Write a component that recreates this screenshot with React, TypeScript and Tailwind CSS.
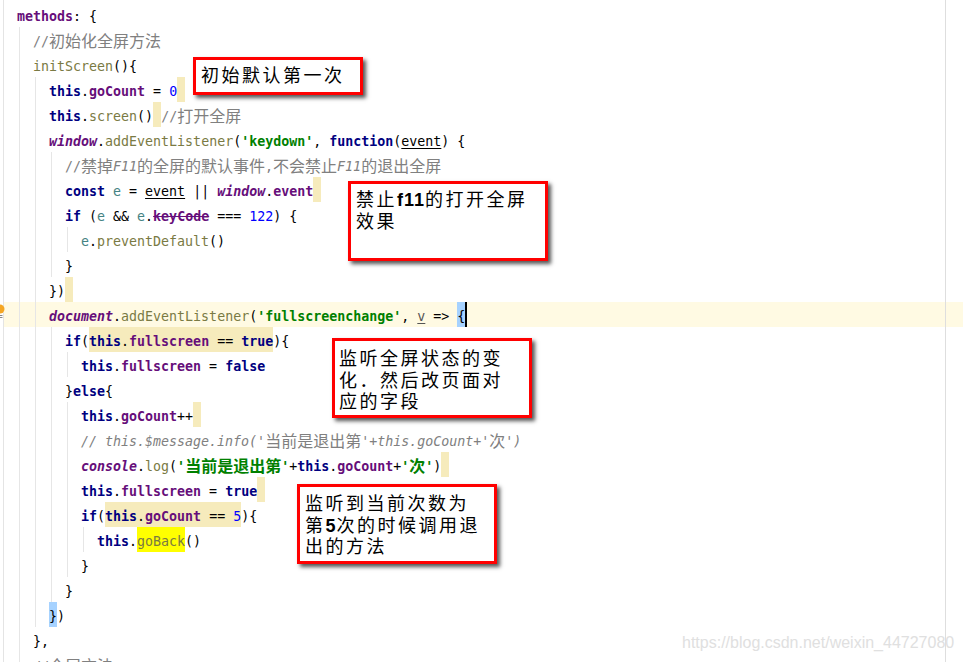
const mono = { fontFamily: '"DejaVu Sans Mono", "Noto Sans CJK SC", monospace' };

// syntax colours, same as the IDE's default light scheme
const kw = "font-bold text-[#000080]";
const prop = "font-bold text-[#660e7a]";
const glob = "font-bold italic text-[#660e7a]";
const fn = "text-[#7a7a43]";
const str = "font-bold text-[#008000]";
const num = "text-[#0000ff]";
const cmt = "text-[#808080]";
const cmtI = "italic text-[#808080]";
const local = "text-[#458383]";
const plain = "text-[#000000]";
const param = "text-[#000000] underline underline-offset-2";
const paramV = "text-[#555555] underline underline-offset-2";
const zh = "text-[16px]";
const hl = "bg-[#f6ebbc]";
const sel = "bg-[#a6d2ff]";

type Token = [string, string?];
type Line = { depth: number; guides: number; caret?: boolean; tokens: Token[] };

const thisDot: Token[] = [["this", kw], [".", plain]];

const lines: Line[] = [
  { depth: 0, guides: 0, tokens: [["methods", prop], [": {", plain]] },
  { depth: 1, guides: 1, tokens: [["//", cmt], ["初始化全屏方法", `${cmt} ${zh}`]] },
  { depth: 1, guides: 1, tokens: [["initScreen", fn], ["(){", plain]] },
  { depth: 2, guides: 2, tokens: [...thisDot, ["goCount", prop], [" = ", plain], ["0", num], [" ", hl]] },
  { depth: 2, guides: 2, tokens: [...thisDot, ["screen", fn], ["()", plain], [" ", hl], ["//", cmt], ["打开全屏", `${cmt} ${zh}`]] },
  {
    depth: 2,
    guides: 2,
    tokens: [
      ["window", glob], [".", plain], ["addEventListener", fn], ["(", plain], ["'keydown'", str], [", ", plain],
      ["function", kw], ["(", plain], ["event", param], [") {", plain],
    ],
  },
  {
    depth: 3,
    guides: 3,
    tokens: [
      ["//", cmt], ["禁掉", `${cmt} ${zh}`], ["F11", cmtI], ["的全屏的默认事件", `${cmt} ${zh}`], [",", cmt],
      ["不会禁止", `${cmt} ${zh}`], ["F11", cmtI], ["的退出全屏", `${cmt} ${zh}`],
    ],
  },
  {
    depth: 3,
    guides: 3,
    tokens: [
      ["const", kw], [" ", plain], ["e", local], [" = ", plain], ["event", param], [" || ", plain],
      ["window", glob], [".", plain], ["event", prop], [" ", hl],
    ],
  },
  {
    depth: 3,
    guides: 3,
    tokens: [
      ["if", kw], [" (", plain], ["e", local], [" && ", plain], ["e", local], [".", plain],
      ["keyCode", `${prop} line-through`], [" === ", plain], ["122", num], [") {", plain],
    ],
  },
  { depth: 4, guides: 4, tokens: [["e", local], [".", plain], ["preventDefault", fn], ["()", plain]] },
  { depth: 3, guides: 3, tokens: [["}", plain]] },
  { depth: 2, guides: 2, tokens: [["})", plain], [" ", hl]] },
  {
    depth: 2,
    guides: 2,
    caret: true,
    tokens: [
      ["document", glob], [".", plain], ["addEventListener", fn], ["(", plain], ["'fullscreenchange'", str], [", ", plain],
      ["v", paramV], [" => ", plain], ["{", `${plain} ${sel}`],
    ],
  },
  {
    depth: 3,
    guides: 3,
    tokens: [
      ["if", kw], ["(", plain], ["this", `${kw} ${hl}`], [".", `${plain} ${hl}`], ["fullscreen", `${prop} ${hl}`],
      [" == ", `${plain} ${hl}`], ["true", `${kw} ${hl}`], ["){", plain],
    ],
  },
  { depth: 4, guides: 4, tokens: [...thisDot, ["fullscreen", prop], [" = ", plain], ["false", kw]] },
  { depth: 3, guides: 3, tokens: [["}", plain], ["else", kw], ["{", plain]] },
  { depth: 4, guides: 4, tokens: [...thisDot, ["goCount", prop], ["++", plain], [" ", hl]] },
  {
    depth: 4,
    guides: 4,
    tokens: [
      ["// this.$message.info('", cmtI], ["当前是退出第", `${cmt} ${zh}`], ["'+this.goCount+'", cmtI],
      ["次", `${cmt} ${zh}`], ["')", cmtI],
    ],
  },
  {
    depth: 4,
    guides: 4,
    tokens: [
      ["console", glob], [".", plain], ["log", fn], ["(", plain], ["'", str], ["当前是退出第", `${str} ${zh}`], ["'", str],
      ["+", plain], ...thisDot, ["goCount", prop], ["+", plain], ["'", str], ["次", `${str} ${zh}`], ["'", str],
      [")", plain], [" ", hl],
    ],
  },
  { depth: 4, guides: 4, tokens: [...thisDot, ["fullscreen", prop], [" = ", plain], ["true", kw], [" ", hl]] },
  {
    depth: 4,
    guides: 4,
    tokens: [
      ["if", kw], ["(", plain], ["this", `${kw} ${hl}`], [".", `${plain} ${hl}`], ["goCount", `${prop} ${hl}`],
      [" == ", `${plain} ${hl}`], ["5", `${num} ${hl}`], ["){", plain],
    ],
  },
  { depth: 5, guides: 5, tokens: [...thisDot, ["goBack", `${fn} bg-[#ffff00]`], ["()", plain]] },
  { depth: 4, guides: 4, tokens: [["}", plain]] },
  { depth: 3, guides: 3, tokens: [["}", plain]] },
  { depth: 2, guides: 2, tokens: [["}", `${plain} ${sel}`], [")", plain]] },
  { depth: 1, guides: 1, tokens: [["},", plain]] },
  { depth: 1, guides: 1, tokens: [["//", cmt], ["全屏方法", `${cmt} ${zh}`]] },
];

function CodeLine({ line }: { line: Line }) {
  return (
    <div className={`flex h-[25px] ${line.caret ? "bg-[#fffae3]" : ""}`}>
      <div className="h-full w-[4px] shrink-0 border-r border-[#e4e4e4] bg-white" />
      <div className="w-[13px] shrink-0" />
      {Array.from({ length: line.depth }).map((_, i) => (
        <div key={i} className="h-full w-[16px] shrink-0 pl-[2px]">
          {i < line.guides && <div className="h-full w-[1px] bg-[#e6e6e6]" />}
        </div>
      ))}
      <div className="whitespace-pre">
        {line.tokens.map(([text, cls], i) => (
          <span key={i} className={`inline-block h-[25px] align-top text-[13.3px] leading-[29px] ${cls ?? ""}`}>
            {text}
          </span>
        ))}
        {line.caret && <span className="inline-block h-[25px] w-[2px] align-top bg-black" />}
      </div>
      <div className="ml-auto h-full w-[18px] shrink-0 border-l border-[#dedede]" />
    </div>
  );
}

function Note({ className, children }: { className: string; children: React.ReactNode }) {
  return (
    <div
      className={`absolute whitespace-nowrap border-[3px] border-[#ff0000] bg-white text-[18px] leading-[21.7px] tracking-[2.5px] text-black shadow-[3px_3px_4px_#555555] ${className}`}
      style={{ fontFamily: '"Liberation Sans", "Noto Sans CJK SC", sans-serif' }}
    >
      {children}
    </div>
  );
}

export default function App() {
  return (
    <main className="relative h-[662px] w-[963px] overflow-hidden bg-white" style={mono}>
      <div className="flex h-[2px] justify-between">
        <div className="h-full w-[4px] border-r border-[#e4e4e4]" />
        <div className="h-full w-[18px] border-l border-[#dedede]" />
      </div>
      {lines.map((line, i) => (
        <CodeLine key={i} line={line} />
      ))}

      {/* intention bulb in the gutter */}
      <svg className="absolute left-0 top-[302px]" width="6" height="18" viewBox="0 0 6 18">
        <circle cx="0" cy="7" r="4.5" fill="#f5a623" />
        <path d="M0 13.5h2.5M0 15.5h2.5" stroke="#888888" strokeWidth="1" />
      </svg>

      <Note className="left-[193px] top-[57px] h-[38px] w-[170px] pl-[5px] pt-[6px]">初始默认第一次</Note>
      <Note className="left-[348px] top-[181px] h-[80px] w-[200px] pl-[5px] pt-[6px]">
        禁止<b className="tracking-[1px]">f11</b>的打开全屏
        <br />
        效果
      </Note>
      <Note className="left-[332px] top-[338px] h-[80px] w-[200px] pl-[4px] pt-[8px]">
        监听全屏状态的变
        <br />
        化．然后改页面对
        <br />
        应的字段
      </Note>
      <Note className="left-[297px] top-[484px] h-[80px] w-[200px] pl-[5px] pt-[7px]">
        监听到当前次数为
        <br />
        第<b className="tracking-[1px]">5</b>次的时候调用退
        <br />
        出的方法
      </Note>

      <div
        className="absolute left-[682px] top-[633px] text-[16px] leading-[20px] text-[#e0e0e0]"
        style={{ fontFamily: '"Liberation Sans", sans-serif' }}
      >
        https://blog.csdn.net/weixin_44727080
      </div>
    </main>
  );
}
